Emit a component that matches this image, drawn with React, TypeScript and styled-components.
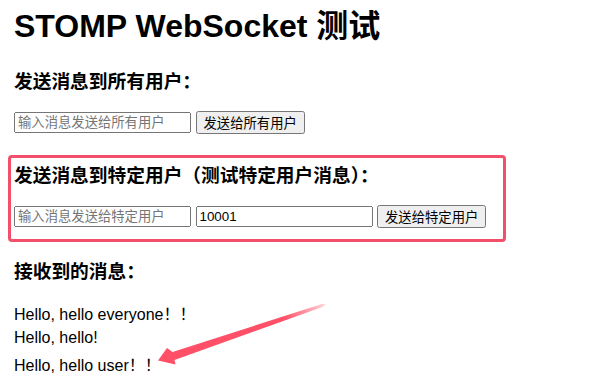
import React from "react";
import styled, { createGlobalStyle } from "styled-components";

const GlobalStyle = createGlobalStyle`
  body {
    margin: 0;
    background: #fff;
    color: #000;
    font-family: "Liberation Sans", "Noto Sans CJK SC", sans-serif;
  }
`;

const Page = styled.div`
  position: relative;
  width: 609px;
  height: 390px;
  padding: 0 14px;
  box-sizing: border-box;
  overflow: hidden;
`;

const Title = styled.h1`
  margin: 0 0 20px;
  font-size: 32px;
  font-weight: bold;
`;

const SectionTitle = styled.h3<{ $top?: number }>`
  margin: ${(p) => p.$top ?? 0}px 0 18px;
  font-size: 18.72px;
  font-weight: bold;
`;

const Row = styled.div`
  display: flex;
  align-items: center;
  gap: 4.5px;
`;

const TextInput = styled.input`
  width: 177px;
  height: 21px;
  box-sizing: border-box;
  padding: 1px 2px;
  font-family: "Liberation Sans", "Noto Sans CJK SC", sans-serif;
  font-size: 13.33px;
  color: #000;
`;

const Button = styled.button`
  height: 23px;
  box-sizing: border-box;
  padding: 0 6px;
  font-family: "Liberation Sans", "Noto Sans CJK SC", sans-serif;
  font-size: 13.33px;
  color: #000;
`;

const Highlight = styled.div`
  margin: 21px 0 0 -6px;
  width: 498px;
  box-sizing: border-box;
  padding: 2px 2px 11px 3px;
  border: 3px solid #f2506a;
  border-radius: 4px;
`;

const Messages = styled.div`
  margin-top: 16px;
`;

const Message = styled.div`
  font-size: 16px;
  margin-bottom: 4.3px;
`;

const Arrow = styled.svg`
  position: absolute;
  left: 150px;
  top: 295px;
  pointer-events: none;
`;

const messages = [
  "Hello, hello everyone！！",
  "Hello, hello!",
  "Hello, hello user！！",
];

export default function App() {
  return (
    <>
      <GlobalStyle />
      <Page>
        <Title>STOMP WebSocket 测试</Title>

        <SectionTitle>发送消息到所有用户：</SectionTitle>
        <Row>
          <TextInput placeholder="输入消息发送给所有用户" />
          <Button>发送给所有用户</Button>
        </Row>

        <Highlight>
          <SectionTitle>发送消息到特定用户（测试特定用户消息）：</SectionTitle>
          <Row>
            <TextInput placeholder="输入消息发送给特定用户" />
            <TextInput defaultValue="10001" />
            <Button>发送给特定用户</Button>
          </Row>
        </Highlight>

        <SectionTitle $top={14}>接收到的消息：</SectionTitle>
        <Messages>
          {messages.map((m, i) => (
            <Message key={i}>{m}</Message>
          ))}
        </Messages>

        <Arrow width="185" height="75" viewBox="0 0 185 75">
          <defs>
            <linearGradient id="arrowFade" gradientUnits="userSpaceOnUse" x1="178" y1="9" x2="135" y2="25">
              <stop offset="0" stopColor="#ff5068" stopOpacity="0.2" />
              <stop offset="1" stopColor="#ff5068" stopOpacity="1" />
            </linearGradient>
          </defs>
          <polygon
            points="8,65.5 17,53 22.5,57 172,9 176,9.5 171,12.5 24.5,65 25.5,69.5"
            fill="url(#arrowFade)"
          />
        </Arrow>
      </Page>
    </>
  );
}
